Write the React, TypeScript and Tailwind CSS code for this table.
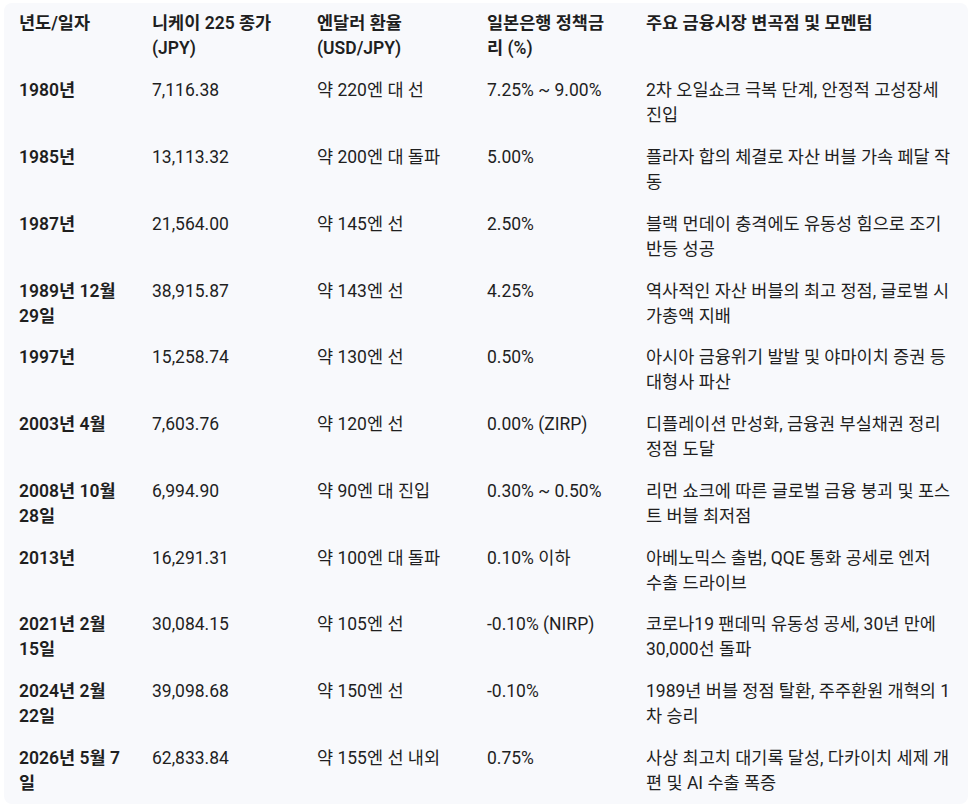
// col5 breaks follow the reference layout
const rows = [
  ['1980년', '7,116.38', '약 220엔 대 선', '7.25% ~ 9.00%', '2차 오일쇼크 극복 단계, 안정적 고성장세\n진입'],
  ['1985년', '13,113.32', '약 200엔 대 돌파', '5.00%', '플라자 합의 체결로 자산 버블 가속 페달 작\n동'],
  ['1987년', '21,564.00', '약 145엔 선', '2.50%', '블랙 먼데이 충격에도 유동성 힘으로 조기\n반등 성공'],
  ['1989년 12월 29일', '38,915.87', '약 143엔 선', '4.25%', '역사적인 자산 버블의 최고 정점, 글로벌 시\n가총액 지배'],
  ['1997년', '15,258.74', '약 130엔 선', '0.50%', '아시아 금융위기 발발 및 야마이치 증권 등\n대형사 파산'],
  ['2003년 4월', '7,603.76', '약 120엔 선', '0.00% (ZIRP)', '디플레이션 만성화, 금융권 부실채권 정리\n정점 도달'],
  ['2008년 10월 28일', '6,994.90', '약 90엔 대 진입', '0.30% ~ 0.50%', '리먼 쇼크에 따른 글로벌 금융 붕괴 및 포스\n트 버블 최저점'],
  ['2013년', '16,291.31', '약 100엔 대 돌파', '0.10% 이하', '아베노믹스 출범, QQE 통화 공세로 엔저\n수출 드라이브'],
  ['2021년 2월 15일', '30,084.15', '약 105엔 선', '-0.10% (NIRP)', '코로나19 팬데믹 유동성 공세, 30년 만에\n30,000선 돌파'],
  ['2024년 2월 22일', '39,098.68', '약 150엔 선', '-0.10%', '1989년 버블 정점 탈환, 주주환원 개혁의 1\n차 승리'],
  ['2026년 5월 7일', '62,833.84', '약 155엔 선 내외', '0.75%', '사상 최고치 대기록 달성, 다카이치 세제 개\n편 및 AI 수출 폭증'],
]

const headers = ['년도/일자', '니케이 225 종가 (JPY)', '엔달러 환율 (USD/JPY)', '일본은행 정책금리 (%)', '주요 금융시장 변곡점 및 모멘텀']

export default function App() {
  return (
    <div
      className="min-h-screen bg-white pl-[4px] pt-[3px] text-[#1f1f1f]"
      style={{ fontFamily: 'Roboto, "Noto Sans CJK KR", sans-serif' }}
    >
      <div className="w-[964px] overflow-hidden rounded-lg bg-[#f8f9fc]">
        <table className="w-full table-fixed border-collapse text-left text-[17.5px] leading-[25px]">
          <colgroup>
            <col className="w-[133px]" />
            <col className="w-[165px]" />
            <col className="w-[170px]" />
            <col className="w-[159px]" />
            <col />
          </colgroup>
          <thead>
            <tr>
              {headers.map((h, i) => (
                <th
                  key={h}
                  className={`py-[8.4px] pl-[15px] align-top font-semibold ${i === 4 ? 'pr-[6px]' : 'pr-[15px]'}`}
                >
                  {h}
                </th>
              ))}
            </tr>
          </thead>
          <tbody>
            {rows.map(row => (
              <tr key={row[0]}>
                {row.map((cell, i) => (
                  <td
                    key={i}
                    className={`py-[8.4px] pl-[15px] align-top ${i === 0 ? 'font-semibold' : ''} ${i === 4 ? 'whitespace-pre-line pr-[6px]' : 'pr-[15px]'}`}
                  >
                    {cell}
                  </td>
                ))}
              </tr>
            ))}
          </tbody>
        </table>
      </div>
    </div>
  )
}
